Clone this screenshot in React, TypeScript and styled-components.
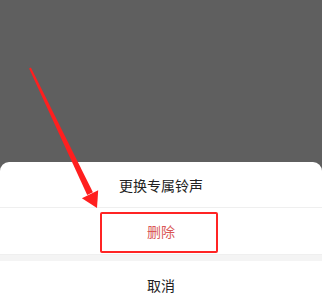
import React from 'react';
import styled, { createGlobalStyle } from 'styled-components';

const GlobalStyle = createGlobalStyle`
  html, body {
    margin: 0;
    padding: 0;
    background: #5f5f5f;
  }
  body {
    font-family: "Noto Sans CJK SC", "Liberation Sans", sans-serif;
  }
`;

interface ActionProps {
  danger?: boolean;
}

const App: React.FC = () => {
  return (
    <Screen>
      <GlobalStyle />
      <Mask />
      <Sheet>
        <ActionRow>更换专属铃声</ActionRow>
        <ActionRow danger>
          删除
          <Highlight />
        </ActionRow>
        <Gap />
        <ActionRow>取消</ActionRow>
      </Sheet>

      {/* 红色标注箭头 */}
      <ArrowLayer viewBox="0 0 322 301" width="322" height="301">
        <polygon
          points="30.9,67.6 29.1,68.4 87.2,195 92.9,192.3"
          fill="#ff1f1f"
        />
        <polygon points="81.9,198.2 98.2,190.2 97,208" fill="#ff1f1f" />
      </ArrowLayer>
    </Screen>
  );
};

const Screen = styled.div`
  position: relative;
  width: 322px;
  height: 301px;
  overflow: hidden;
  display: flex;
  flex-direction: column;
  background: #5f5f5f;
`;

const Mask = styled.div`
  flex: 0 0 162px;
`;

const Sheet = styled.div`
  flex: 1 0 auto;
  display: flex;
  flex-direction: column;
  background: #ffffff;
  border-radius: 9px 9px 0 0;
`;

const ActionRow = styled.div<ActionProps>`
  position: relative;
  height: 46px;
  display: flex;
  align-items: center;
  justify-content: center;
  font-size: 14px;
  color: ${(p) => (p.danger ? '#d95757' : '#222222')};
  border-bottom: 1px solid #efefef;

  &:first-child {
    height: 45px;
  }

  &:last-child {
    border-bottom: none;
    height: 48px;
  }
`;

const Gap = styled.div`
  height: 6px;
  background: #f4f4f4;
`;

const Highlight = styled.div`
  position: absolute;
  left: 100px;
  top: 4px;
  width: 114px;
  height: 37px;
  border: 2px solid #ff2424;
  border-radius: 2px;
`;

const ArrowLayer = styled.svg`
  position: absolute;
  left: 0;
  top: 0;
  pointer-events: none;
`;

export default App;
